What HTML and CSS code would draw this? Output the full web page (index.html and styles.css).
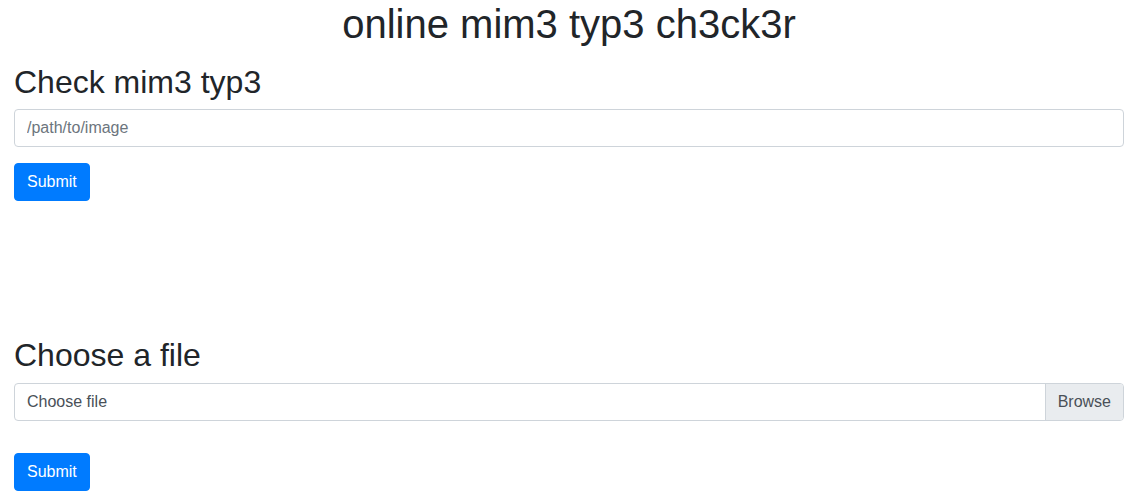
FILE: index.html
```html
<!DOCTYPE html>
<html lang="en">
<head>
    <meta charset="UTF-8">
    <meta name="viewport" content="width=device-width, initial-scale=1.0">
    <title>online mim3 typ3 ch3ck3r</title>
    <link rel="stylesheet" href="styles.css">
</head>
<body>
    <div class="page">
        <h1 class="title">online mim3 typ3 ch3ck3r</h1>

        <!-- check by path -->
        <form class="section">
            <h2>Check mim3 typ3</h2>
            <div class="form-group">
                <input type="text" class="form-control" placeholder="/path/to/image">
            </div>
            <button type="button" class="btn">Submit</button>
        </form>

        <!-- upload -->
        <form class="section upload">
            <h2>Choose a file</h2>
            <div class="form-group file-group">
                <div class="custom-file">
                    <span class="custom-file-label">Choose file</span>
                    <span class="custom-file-browse">Browse</span>
                </div>
            </div>
            <button type="button" class="btn">Submit</button>
        </form>
    </div>
</body>
</html>
```

FILE: styles.css
```css
body {
    margin: 0;
    font-family: "Liberation Sans", Arial, sans-serif;
    font-size: 16px;
    line-height: 1.5;
    color: #212529;
    background: #fff;
}
.page {
    padding: 0 16px 0 14px;
}
h1, h2 {
    font-weight: 500;
    line-height: 1.2;
    margin: 0 0 8px;
}
.title {
    font-size: 40px;
    font-weight: 400;
    text-align: center;
    margin-bottom: 15px;
}
h2 {
    font-size: 32px;
    font-weight: 400;
}
.section {
    margin: 0;
}
.upload {
    margin-top: 135px;
}
.form-group {
    margin-bottom: 16px;
}
.file-group {
    margin-bottom: 32px;
}
.form-control {
    display: block;
    box-sizing: border-box;
    width: 100%;
    height: 38px;
    padding: 6px 12px;
    font-family: inherit;
    font-size: 16px;
    color: #495057;
    border: 1px solid #ced4da;
    border-radius: 4px;
    background: #fff;
    outline: none;
}
.form-control::placeholder {
    color: #6c757d;
}
.btn {
    display: inline-block;
    box-sizing: border-box;
    height: 38px;
    padding: 6px 12px;
    font-family: inherit;
    font-size: 16px;
    line-height: 1.5;
    color: #fff;
    background: #007bff;
    border: 1px solid #007bff;
    border-radius: 4px;
}
.custom-file {
    display: flex;
    box-sizing: border-box;
    height: 38px;
    border: 1px solid #ced4da;
    border-radius: 4px;
    overflow: hidden;
    color: #495057;
}
.custom-file-label {
    flex: 1;
    padding: 6px 12px;
}
.custom-file-browse {
    padding: 6px 12px;
    background: #e9ecef;
    border-left: 1px solid #ced4da;
}
```
